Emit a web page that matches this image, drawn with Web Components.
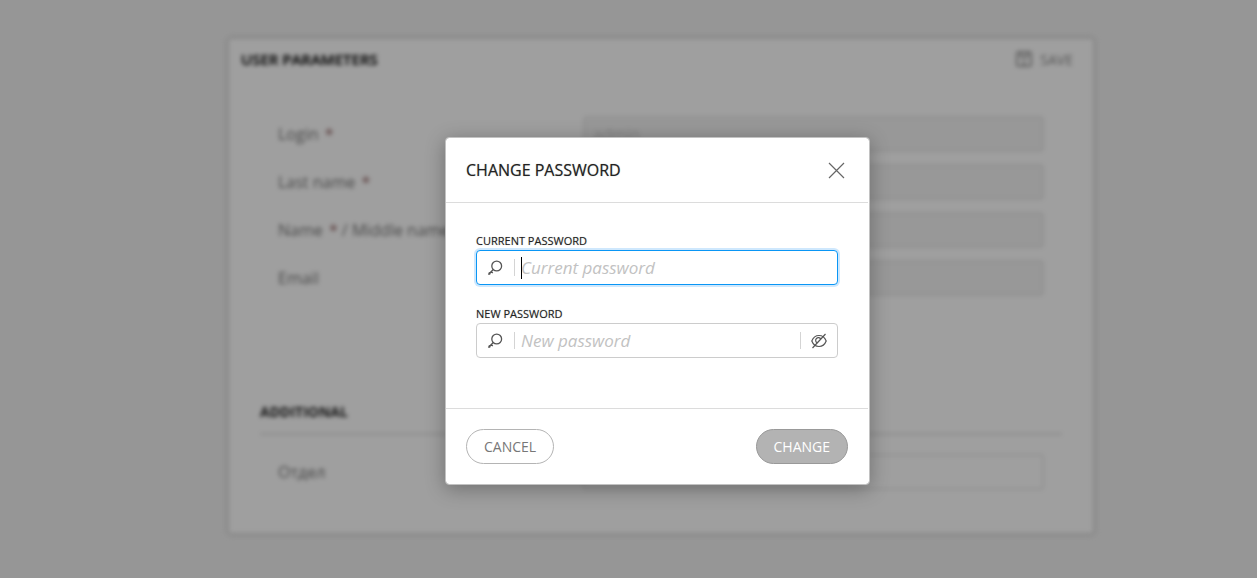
<!DOCTYPE html>
<html lang="en">
<head>
<meta charset="utf-8">
<meta name="viewport" content="width=device-width, initial-scale=1">
<title>User parameters</title>
<style>
  body { margin: 0; font-family: "Open Sans", "Noto Sans", sans-serif; color: #222; background: #f0f0f0; }
</style>
</head>
<body>
<app-shell>
  <user-card slot="page" heading="User parameters">
    <form-section>
      <form-row label="Login" required value="admin" locked></form-row>
      <form-row label="Last name" required locked></form-row>
      <form-row label="Name" required more=" / Middle name" locked></form-row>
      <form-row label="Email" locked></form-row>
    </form-section>
    <form-section heading="Additional">
      <form-row label="Отдел"></form-row>
    </form-section>
  </user-card>
  <modal-dialog slot="overlay" heading="Change password">
    <password-field label="Current password" active></password-field>
    <password-field label="New password" toggle></password-field>
    <pill-button slot="actions">Cancel</pill-button>
    <pill-button slot="actions" filled>Change</pill-button>
  </modal-dialog>
</app-shell>

<script>
class Base extends HTMLElement {
  connectedCallback() {
    if (this.shadowRoot) return;
    this.attachShadow({ mode: 'open' }).innerHTML =
      '<style>*{box-sizing:border-box}button,input{font:inherit;margin:0}</style>' + this.view();
  }
  text(name) { return this.getAttribute(name) || ''; }
}

customElements.define('app-shell', class extends Base {
  view() {
    return `<style>
      :host { display: grid; min-height: 100vh; }
      .page, .scrim { grid-area: 1 / 1; display: flex; justify-content: center; align-items: flex-start; }
      .page { padding: 39px 0 40px 65px; }
      .scrim { z-index: 1; padding: 137px 0 40px 58px; background: rgba(0, 0, 0, .375); }
    </style>
    <div class="page"><slot name="page"></slot></div>
    <div class="scrim"><slot name="overlay"></slot></div>`;
  }
});

customElements.define('user-card', class extends Base {
  view() {
    return `<style>
      :host { display: block; flex: 0 1 864px; box-sizing: border-box; padding-bottom: 43px; background: #fff;
        border-radius: 3px; box-shadow: 0 0 4px 1px #c4c4c4; filter: blur(2px); }
      header { display: flex; justify-content: space-between; align-items: center; height: 40px; padding: 0 20px 0 12px; }
      h1 { margin: 0; font-size: 15px; font-weight: 600; text-transform: uppercase; text-shadow: 0 0 1px #333; }
      button { display: flex; align-items: center; gap: 8px; padding: 0; border: 0; background: none;
        color: #888; font-size: 14px; text-transform: uppercase; }
      svg { color: #888; }
    </style>
    <header>
      <h1>${this.text('heading')}</h1>
      <button type="button"><svg width="16" height="16" viewBox="0 0 16 16" fill="none" stroke="currentColor" stroke-width="1.6"><rect x="1" y="1" width="14" height="14" rx="1"/><path d="M5 1v5h6V1M8 9v6"/></svg>Save</button>
    </header>
    <slot></slot>`;
  }
});

customElements.define('form-section', class extends Base {
  view() {
    const h = this.text('heading');
    return `<style>
      :host { display: block; padding: 37px 31px 0; }
      :host([heading]) { padding-top: 106px; }
      h2 { margin: 0 0 19px; padding-bottom: 11px; border-bottom: 2px solid #e2e2e2;
        font-size: 14px; line-height: 20px; font-weight: 700; text-transform: uppercase; }
      .rows { display: grid; gap: 12px; padding: 0 18px; }
    </style>
    ${h ? `<h2>${h}</h2>` : ''}<div class="rows"><slot></slot></div>`;
  }
});

customElements.define('form-row', class extends Base {
  view() {
    const locked = this.hasAttribute('locked');
    return `<style>
      :host { display: grid; grid-template-columns: 305px 1fr; align-items: center; font-size: 16px; }
      label { color: #777; }
      b { margin-left: 2px; color: #855; font-weight: 400; }
      input { width: 100%; height: 36px; padding: 0 8px; border: 2px solid #eaeaea; border-radius: 4px;
        background: #fff; color: #ccc; font-size: 16px; }
      input:read-only { background: #f4f4f4; border-color: #e9e9e9; }
    </style>
    <label for="f">${this.text('label')}${this.hasAttribute('required') ? ' <b>*</b>' : ''}${this.text('more')}</label>
    <input id="f" type="text" value="${this.text('value')}" ${locked ? 'readonly' : ''}>`;
  }
});

customElements.define('modal-dialog', class extends Base {
  view() {
    return `<style>
      :host { display: block; flex: 0 1 425px; box-sizing: border-box; padding-right: 1px; border: 1px solid #c2c2c2;
        border-radius: 4px; background: #fff; background-clip: padding-box; box-shadow: 0 4px 20px rgba(0, 0, 0, .3); }
      header { display: flex; justify-content: space-between; align-items: center; height: 65px; padding: 0 20px;
        border-bottom: 1px solid #dcdcdc; }
      h2 { margin: 0; font-size: 16px; font-weight: 500; text-transform: uppercase; text-shadow: 0 0 1px #999; }
      button { display: flex; padding: 3px; border: 0; background: none; color: #666; }
      .body { display: grid; gap: 20px; padding: 29px 30px 50px; }
      footer { display: flex; justify-content: space-between; padding: 20px; border-top: 1px solid #dcdcdc; }
    </style>
    <section role="dialog" aria-modal="true" aria-labelledby="t">
      <header>
        <h2 id="t">${this.text('heading')}</h2>
        <button type="button" aria-label="Close"><svg width="17" height="17" viewBox="0 0 17 17" fill="none" stroke="currentColor" stroke-width="1.2"><path d="M1 1l15 15M16 1L1 16"/></svg></button>
      </header>
      <div class="body"><slot></slot></div>
      <footer><slot name="actions"></slot></footer>
    </section>`;
  }
});

customElements.define('password-field', class extends Base {
  view() {
    const label = this.text('label');
    return `<style>
      :host { display: block; }
      label { display: block; font-size: 11px; line-height: 18px; font-weight: 500; color: #222;
        text-transform: uppercase; text-shadow: 0 0 1px #aaa; }
      .box { display: flex; align-items: center; height: 35px; padding: 0 10px; border: 1px solid #ccc; border-radius: 4px; background: #fff; }
      :host([active]) .box { border-color: #0a96f5; box-shadow: 0 0 0 2px #cfe8fd; }
      svg { flex: none; color: #555; }
      .rule { flex: none; width: 1px; height: 17px; background: #d4d4d4; }
      .lead { margin: 0 6px 0 11px; }
      .tail { margin-right: 10px; }
      .text { display: flex; flex: 1; min-width: 0; align-items: center; }
      .caret { flex: none; width: 1px; height: 22px; margin-right: -1px; background: #000; z-index: 1; }
      input { flex: 1; min-width: 0; height: 33px; padding: 0; border: 0; outline: 0; background: none; color: #222; font-size: 17px; }
      input::placeholder { color: #c2c2c2; font-style: italic; opacity: 1; }
      button { display: flex; padding: 0; border: 0; background: none; }
    </style>
    <label for="p">${label}</label>
    <div class="box">
      <svg width="16" height="16" viewBox="0 0 16 16" fill="none" stroke="currentColor" stroke-width="1.3"><circle cx="9.700" cy="6" r="4.900"/><path d="M6.300 9.500L1.300 14.500M3.800 11.200l2 1.800M1.800 12.500l1.600 1.800"/></svg>
      <span class="rule lead"></span>
      <div class="text">
        ${this.hasAttribute('active') ? '<span class="caret"></span>' : ''}
        <input id="p" type="password" placeholder="${label}">
      </div>
      ${this.hasAttribute('toggle') ? `<span class="rule tail"></span>
      <button type="button" aria-label="Show password"><svg width="16" height="16" viewBox="0 0 16 16" fill="none" stroke="currentColor" stroke-width="1.200"><path d="M.8 8C2.300 4.200 5 2.500 8 2.500S13.700 4.200 15.200 8C13.700 11.800 11 13.500 8 13.500S2.300 11.800 .8 8zM1.500 15L14.500 1"/><path d="M9.800 6.200A2.700 2.700 0 1 0 6.200 9.800"/></svg></button>` : ''}
    </div>`;
  }
});

customElements.define('pill-button', class extends Base {
  view() {
    return `<style>
      :host { display: block; }
      button { height: 35px; padding: 0 17px; border: 1px solid #b4b4b4; border-radius: 18px; background: #fff;
        color: #777; font-size: 14px; text-transform: uppercase; }
      :host([filled]) button { border-color: #999; background: #b3b3b3; color: #fff; font-weight: 500; }
    </style>
    <button type="button"><slot></slot></button>`;
  }
});
</script>
</body>
</html>
